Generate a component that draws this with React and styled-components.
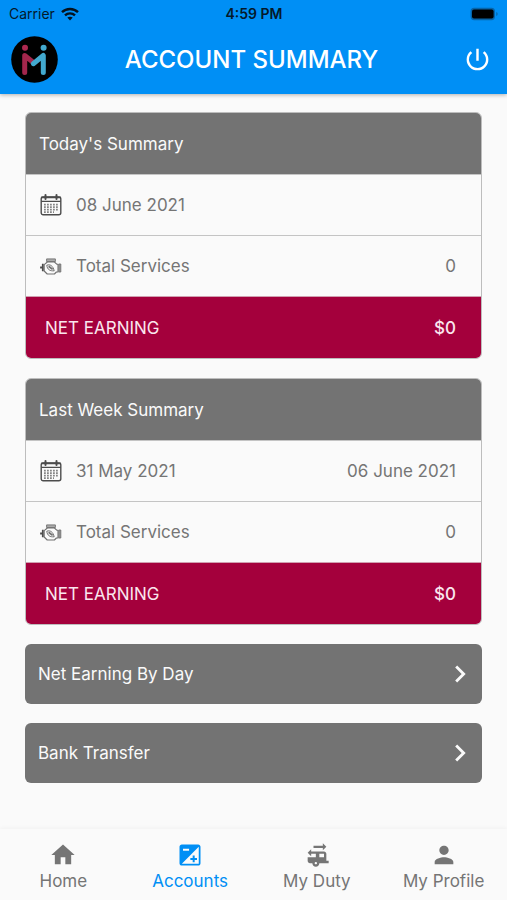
import { useState } from 'react'
import styled, { createGlobalStyle } from 'styled-components'
import {
  MdChevronRight,
  MdHome,
  MdPerson,
  MdPowerSettingsNew,
  MdRvHookup,
} from 'react-icons/md'

const GlobalStyle = createGlobalStyle`
  * {
    box-sizing: border-box;
  }

  body {
    margin: 0;
    background-color: #fafafa;
    color: #757575;
    font-family: Inter, 'Liberation Sans', sans-serif;
    font-size: 17px;
    line-height: 24px;
  }

  svg {
    display: block;
    flex-shrink: 0;
  }

  button {
    padding: 0;
    border: 0;
    background: none;
    color: inherit;
    font: inherit;
    cursor: pointer;
  }
`
const Page = styled.div`
  display: flex;
  flex-direction: column;
  min-height: 100vh;
`
const Header = styled.header`
  background-color: #008ff5;
  box-shadow: 0 1px 4px rgba(0, 0, 0, 0.3);
`
const StatusBar = styled.div`
  display: grid;
  grid-template-columns: 1fr auto 1fr;
  align-items: center;
  height: 28px;
  padding: 0 8px 0 9px;
  color: #04192b;
  font-size: 14px;
`
const Carrier = styled.span`
  display: flex;
  align-items: center;
  gap: 6px;
`
const Clock = styled.time`
  font-weight: 600;
`
const Battery = styled.span`
  justify-self: end;
`
const TitleBar = styled.div`
  display: grid;
  grid-template-columns: 1fr auto 1fr;
  align-items: center;
  height: 66px;
  padding: 0 15px 3px 11px;
  color: #fff;
`
const Title = styled.h1`
  margin: 0;
  font-size: 24px;
  font-weight: 500;
`
const PowerButton = styled.button`
  justify-self: end;
`
const Main = styled.main`
  display: flex;
  flex: 1;
  flex-direction: column;
  gap: 19px;
  padding: 18px 25px;
`
const Card = styled.section`
  overflow: hidden;
  border: 1px solid #bdbdbd;
  border-radius: 6px;
`
const CardTitle = styled.h2`
  display: flex;
  align-items: center;
  height: 61px;
  margin: 0;
  padding: 0 13px;
  background-color: #737373;
  color: #fafafa;
  font-size: 17px;
  font-weight: 400;
`
const Row = styled.div`
  display: flex;
  align-items: center;
  gap: 14px;
  height: 61px;
  padding: 0 25px 0 14px;
  border-top: 1px solid #c4c4c4;
`
const RowValue = styled.span`
  margin-left: auto;
`
const TotalRow = styled.div`
  display: flex;
  align-items: center;
  justify-content: space-between;
  height: 62px;
  padding: 0 25px 0 19px;
  border-top: 1px solid #d0a0b0;
  background-color: #a4003c;
  color: #fae6ee;
`
const Amount = styled.strong`
  font-weight: 500;
`
const LinkButton = styled.button`
  && {
    display: flex;
    align-items: center;
    justify-content: space-between;
    height: 60px;
    padding: 0 5px 0 13px;
    border-radius: 6px;
    background-color: #737373;
    color: #fafafa;
  }
`
const TabBar = styled.nav`
  display: grid;
  grid-template-columns: repeat(4, 1fr);
  height: 71px;
  background-color: #fafafa;
  box-shadow: 0 -1px 4px rgba(0, 0, 0, 0.04);
`
const Tab = styled.a`
  display: flex;
  flex-direction: column;
  align-items: center;
  padding-top: 12px;
  color: ${(props) => (props.$active ? '#008ff5' : '#757575')};
  text-decoration: none;
  white-space: nowrap;
`

const WifiIcon = () => (
  <svg width="18" height="14" viewBox="0 0 18 14" fill="none" aria-hidden="true">
    <g stroke="#04121e" strokeWidth="2.4">
      <path d="M1 5.2C5.4.9 12.6.9 17 5.2" />
      <path d="M4 8.4c2.8-2.7 7.2-2.7 10 0" />
    </g>
    <path d="M6.3 10.6c1.5-1.3 3.9-1.3 5.4 0L9 13.4z" fill="#04121e" />
  </svg>
)

const BatteryIcon = () => (
  <svg width="29" height="14" viewBox="0 0 29 14" role="img" aria-label="Battery full">
    <rect x=".6" y=".8" width="24.4" height="12.4" rx="3.6" fill="#0764a8" />
    <rect x="2" y="2.4" width="21.6" height="9.2" rx="2" fill="#000" />
    <path d="M26.3 5c1.8.7 1.8 3.3 0 4z" fill="#0764a8" />
  </svg>
)

const Logo = () => (
  <svg width="47" height="47" viewBox="0 0 47 47" fill="none" role="img" aria-label="Logo">
    <circle cx="23.5" cy="23.5" r="23.3" fill="#000" />
    <circle cx="14" cy="11.8" r="3" fill="#ad2950" />
    <circle cx="32.6" cy="11.8" r="3" fill="#43a9ce" />
    <g strokeWidth="5" strokeLinecap="round" strokeLinejoin="round">
      <path d="M13.7 36.500V19.500l8.400 6.700" stroke="#a3264c" />
      <path d="M22.300 27.700L32.300 19.500V36.500" stroke="#43a9ce" />
    </g>
  </svg>
)

const CalendarIcon = () => (
  <svg width="22" height="22" viewBox="0 0 22 22" fill="none" stroke="#4c4c4c" aria-hidden="true">
    <rect x="1.2" y="3" width="19.6" height="17.8" rx="2" strokeWidth="1.4" />
    <path d="M1.2 7.4h19.6" strokeWidth="1.1" />
    <path d="M1.2 3.3h19.6" strokeWidth="1.7" />
    <path d="M5.5 1v4M16.5 1v4" strokeWidth="2" strokeLinecap="round" />
    <path
      d="M4 10.6h14M4 13.1h14M4 15.6h14M4 18.1h10"
      strokeWidth="1.6"
      strokeDasharray="1.8 1.2"
      stroke="#858585"
    />
  </svg>
)

const EngineIcon = () => (
  <svg width="22" height="22" viewBox="0 0 22 22" fill="none" stroke="#707070" aria-hidden="true">
    <path d="M6.6 3.9h8.8v2.6H6.6z" fill="#aaa" strokeWidth=".9" />
    <path
      d="M7.4 7h7l2.6 2.3h1v7.7h-1.6l-2 2H7.2l-3-3V9.6z"
      strokeWidth="1.1"
      strokeLinejoin="round"
    />
    <path d="M2.8 8.8v7.4M1 11.4v2.2" stroke="#4c4c4c" strokeWidth="1.8" />
    <path d="M18.8 9h2v8h-2z" fill="#999" strokeWidth=".9" />
    <path d="M6.8 10.2c3.4-1.2 6.2.6 7.4 5.6-4.2.4-7-1.3-7.4-5.6z" strokeWidth="1" />
    <path d="M8.6 11.2l4 3.2" strokeWidth="1.8" />
  </svg>
)

const ExposureIcon = ({ size }) => (
  <svg width={size} height={size} viewBox="0 0 24 24" fill="currentColor" aria-hidden="true">
    <path
      fillRule="evenodd"
      d="M5 3h14c1.1 0 2 .9 2 2v14c0 1.1-.9 2-2 2H5c-1.1 0-2-.9-2-2V5c0-1.1.9-2 2-2zm14.500 2L5 19.500h14.500zM6 6.600v1.800h5.200V6.600z"
    />
    <path d="M14.300 12.500h1.700v2h2v1.700h-2v2h-1.700v-2h-2v-1.700h2z" />
  </svg>
)

const tabs = [
  { name: 'Home', icon: MdHome },
  { name: 'Accounts', icon: ExposureIcon },
  { name: 'My Duty', icon: MdRvHookup },
  { name: 'My Profile', icon: MdPerson },
]

const SummaryCard = ({ title, from, to, services, earning }) => (
  <Card>
    <CardTitle>{title}</CardTitle>
    <Row>
      <CalendarIcon />
      <span>{from}</span>
      {to && <RowValue>{to}</RowValue>}
    </Row>
    <Row>
      <EngineIcon />
      <span>Total Services</span>
      <RowValue>{services}</RowValue>
    </Row>
    <TotalRow>
      <span>NET EARNING</span>
      <Amount>${earning}</Amount>
    </TotalRow>
  </Card>
)

const App = () => {
  const [activeTab, setActiveTab] = useState('Accounts')

  return (
    <Page>
      <GlobalStyle />
      <Header>
        <StatusBar>
          <Carrier>
            Carrier
            <WifiIcon />
          </Carrier>
          <Clock>4:59 PM</Clock>
          <Battery>
            <BatteryIcon />
          </Battery>
        </StatusBar>
        <TitleBar>
          <Logo />
          <Title>ACCOUNT SUMMARY</Title>
          <PowerButton type="button" aria-label="Log out">
            <MdPowerSettingsNew size={29} />
          </PowerButton>
        </TitleBar>
      </Header>

      <Main>
        <SummaryCard
          title="Today's Summary"
          from="08 June 2021"
          services={0}
          earning={0}
        />
        <SummaryCard
          title="Last Week Summary"
          from="31 May 2021"
          to="06 June 2021"
          services={0}
          earning={0}
        />
        <LinkButton type="button">
          Net Earning By Day
          <MdChevronRight size={34} />
        </LinkButton>
        <LinkButton type="button">
          Bank Transfer
          <MdChevronRight size={34} />
        </LinkButton>
      </Main>

      <TabBar>
        {tabs.map(({ name, icon: Icon }) => (
          <Tab
            key={name}
            href="#"
            $active={name === activeTab}
            aria-current={name === activeTab ? 'page' : undefined}
            onClick={() => setActiveTab(name)}
          >
            <Icon size={28} />
            {name}
          </Tab>
        ))}
      </TabBar>
    </Page>
  )
}
export default App
